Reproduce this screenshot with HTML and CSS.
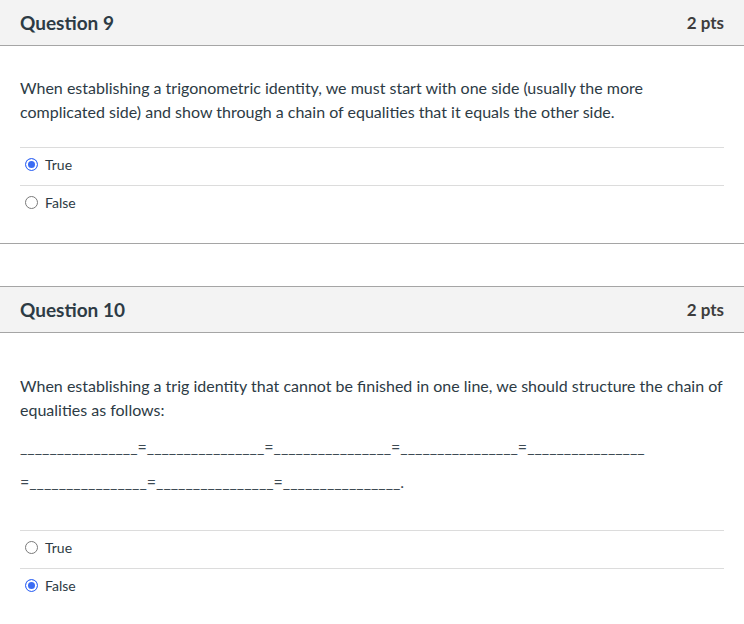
FILE: index.html
```html
<!DOCTYPE html>
<html>
<head>
<meta charset="utf-8">
<link rel="stylesheet" href="styles.css">
</head>
<body>
<div class="question q9">
  <div class="q-header">
    <span class="q-title">Question 9</span>
    <span class="q-pts">2 pts</span>
  </div>
  <div class="q-body">
    <div class="q-text">
      <p>When establishing a trigonometric identity, we must start with one side (usually the more complicated side) and show through a chain of equalities that it equals the other side.</p>
    </div>
    <div class="answers">
      <div class="answer"><span class="radio checked"></span><span class="label">True</span></div>
      <div class="answer"><span class="radio"></span><span class="label">False</span></div>
    </div>
  </div>
</div>

<div class="question q10">
  <div class="q-header">
    <span class="q-title">Question 10</span>
    <span class="q-pts">2 pts</span>
  </div>
  <div class="q-body">
    <div class="q-text">
      <p>When establishing a trig identity that cannot be finished in one line, we should structure the chain of equalities as follows:</p>
      <p class="chain first">________________=________________=________________=________________=________________</p>
      <p class="chain">=________________=________________=________________.</p>
    </div>
    <div class="answers">
      <div class="answer"><span class="radio"></span><span class="label">True</span></div>
      <div class="answer"><span class="radio checked"></span><span class="label">False</span></div>
    </div>
  </div>
</div>
</body>
</html>
```

FILE: styles.css
```css
html, body {
  margin: 0;
  padding: 0;
  background: #ffffff;
}
body {
  font-family: Lato, "Open Sans", sans-serif;
  color: #2d3b45;
  width: 744px;
  overflow: hidden;
}
.question {
  border-bottom: 1px solid #a5a5a5;
}
.q10 {
  margin-top: 42px;
  border-top: 1px solid #a5a5a5;
  border-bottom: none;
}
.q-header {
  height: 45px;
  background: #f3f3f3;
  border-bottom: 1px solid #a5a5a5;
  display: flex;
  align-items: center;
  justify-content: space-between;
  padding: 0 20px;
  box-sizing: content-box;
}
.q-title {
  font-weight: 700;
  font-size: 19px;
  color: #2d3b45;
}
.q-pts {
  font-weight: 700;
  font-size: 17px;
  color: #3d3d3d;
}
.q-body {
  padding: 0 20px 20px 20px;
}
.q-text p {
  margin: 0;
  font-size: 16px;
  line-height: 24px;
}
.q9 .q-text {
  padding-top: 30px;
  padding-bottom: 23px;
}
.q10 .q-text {
  padding-top: 41px;
  padding-bottom: 36px;
}
.q-text p.chain {
  white-space: nowrap;
  color: #3d4a53;
  margin-top: 11px;
}
.q-text p.chain.first {
  margin-top: 13px;
}
.answer {
  height: 33px;
  border-top: 1px solid #dcdcdc;
  display: flex;
  align-items: center;
  padding-left: 5px;
  padding-bottom: 4px;
  box-sizing: content-box;
  font-size: 14px;
}
.radio {
  width: 13px;
  height: 13px;
  box-sizing: border-box;
  border-radius: 50%;
  border: 1px solid #7a7a7a;
  background: #ffffff;
  margin-right: 7px;
  flex: none;
}
.radio.checked {
  border: 1.5px solid #3b6cf4;
  background: #3b6cf4;
  box-shadow: inset 0 0 0 2px #ffffff;
}
.label {
  color: #2d3b45;
}
```
